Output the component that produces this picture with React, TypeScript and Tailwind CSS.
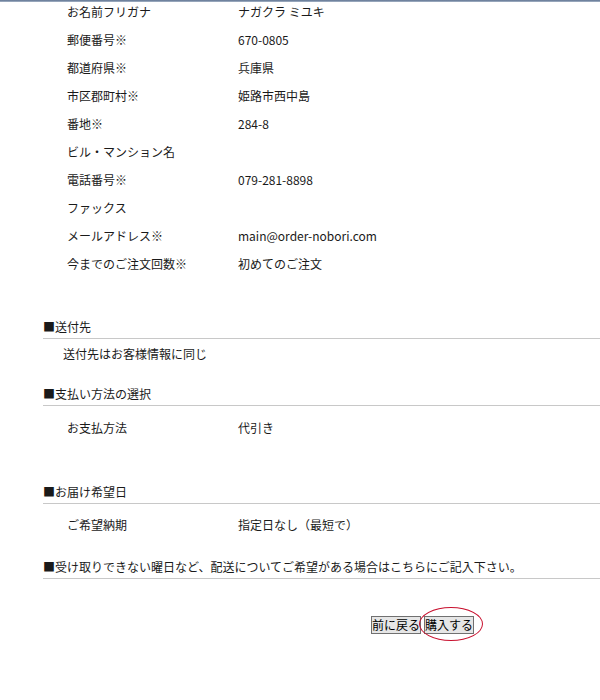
import React from "react";

const font = { fontFamily: '"Noto Sans CJK JP", "Noto Sans", sans-serif' };

const rows: [string, string][] = [
  ["お名前フリガナ", "ナガクラ ミユキ"],
  ["郵便番号※", "670-0805"],
  ["都道府県※", "兵庫県"],
  ["市区郡町村※", "姫路市西中島"],
  ["番地※", "284-8"],
  ["ビル・マンション名", ""],
  ["電話番号※", "079-281-8898"],
  ["ファックス", ""],
  ["メールアドレス※", "main@order-nobori.com"],
  ["今までのご注文回数※", "初めてのご注文"],
];

function Row({ label, value }: { label: string; value: string }) {
  return (
    <div className="flex h-[28px] items-center">
      <div className="w-[195px] pl-[24px]">{label}</div>
      <div>{value}</div>
    </div>
  );
}

function Header({ children, className }: { children: React.ReactNode; className?: string }) {
  return (
    <div className={"flex h-[23px] items-center border-b border-[#c8c8c8] " + (className ?? "")}>
      {children}
    </div>
  );
}

export default function App() {
  return (
    <div className="relative h-[700px] w-[600px] overflow-hidden bg-white text-[12px] leading-[20px] text-[#1a1a1a]" style={font}>
      <div className="absolute left-0 top-0 h-[2px] w-full bg-gradient-to-b from-[#5d7290] to-[#a9b6c8]" />
      <div className="-mt-[2px] pl-[43px]">
        {rows.map(([l, v]) => (
          <Row key={l} label={l} value={v} />
        ))}

        <Header className="mt-[38px]">■送付先</Header>
        <div className="mt-[5px] flex h-[20px] items-center pl-[20px]">送付先はお客様情報に同じ</div>

        <Header className="mt-[19px]">■支払い方法の選択</Header>
        <div className="mt-[8px]">
          <Row label="お支払方法" value="代引き" />
        </div>

        <Header className="mt-[39px]">■お届け希望日</Header>
        <div className="mt-[7px]">
          <Row label="ご希望納期" value="指定日なし（最短で）" />
        </div>

        <Header className="mt-[17px]">■受け取りできない曜日など、配送についてご希望がある場合はこちらにご記入下さい。</Header>

        <div className="mt-[36px] flex pl-[328px]">
          <div className="flex items-center gap-[3px]">
            <button className="h-[18px] border border-[#707070] bg-[#e6e6e6] px-0 text-[12px] leading-[16px] text-black">
              前に戻る
            </button>
            <div className="relative">
              <button className="h-[18px] border border-[#707070] bg-[#e6e6e6] px-0 text-[12px] leading-[16px] text-black">
                購入する
              </button>
              <div className="pointer-events-none absolute -left-[5px] -right-[9px] -top-[8px] -bottom-[6px] rounded-[50%] border border-[#c8102e]" />
            </div>
          </div>
        </div>
      </div>
    </div>
  );
}
